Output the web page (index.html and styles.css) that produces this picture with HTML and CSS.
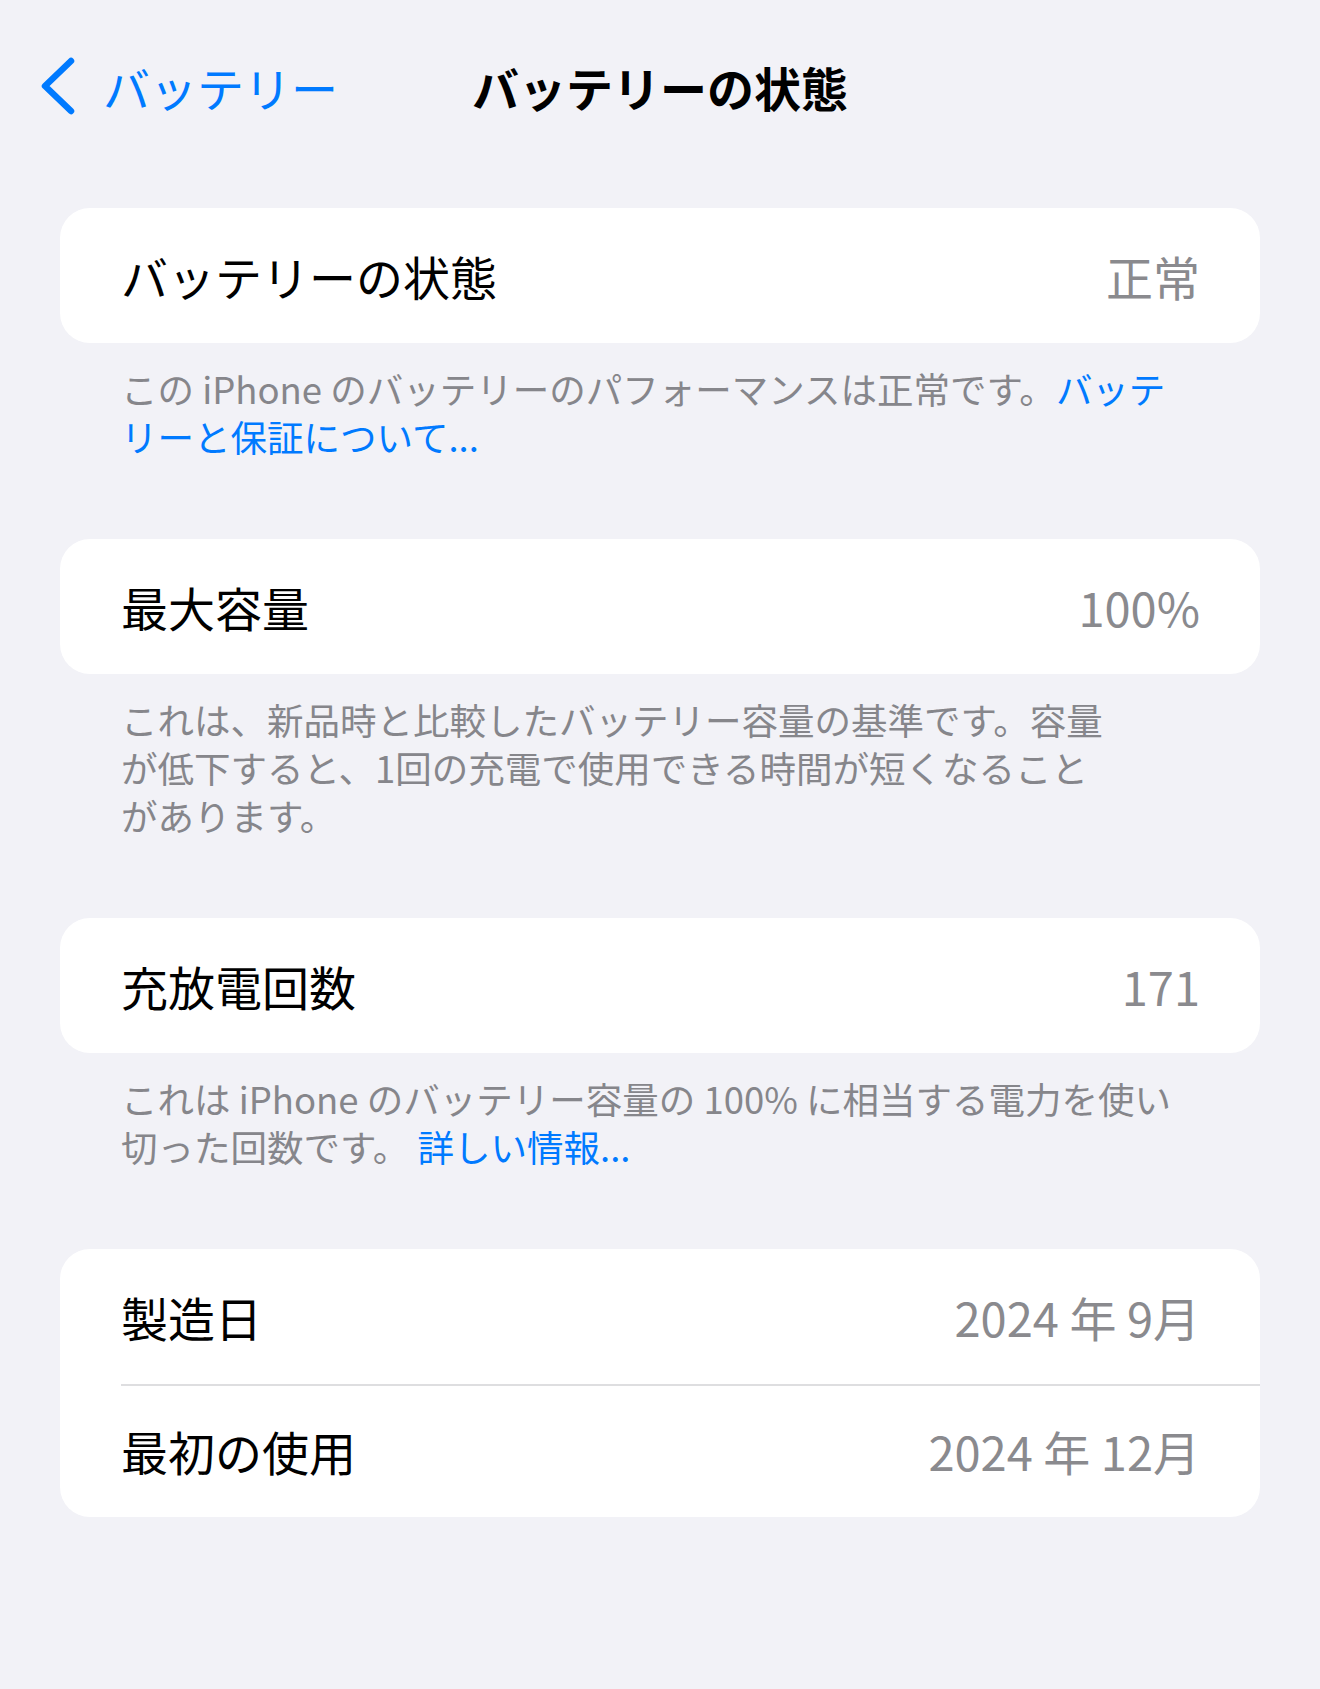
FILE: index.html
```html
<!DOCTYPE html>
<html lang="ja">
<head>
    <meta charset="UTF-8">
    <meta name="viewport" content="width=device-width, initial-scale=1.0">
    <title>バッテリーの状態</title>
    <link rel="stylesheet" href="styles.css">
</head>
<body>

    <header class="nav-bar">
        <a class="back-button" href="#">
            <svg class="back-chevron" viewBox="0 0 36 58" fill="none">
                <path d="M31 4 L5 29 L31 54"
                      stroke="currentColor"
                      stroke-width="6.5"
                      stroke-linecap="round"
                      stroke-linejoin="round"/>
            </svg>
            <span>バッテリー</span>
        </a>
        <h1 class="nav-title">バッテリーの状態</h1>
        <div></div>
    </header>

    <main class="settings">

        <section class="group">
            <div class="card">
                <div class="row">
                    <span class="row-label">バッテリーの状態</span>
                    <span class="row-value">正常</span>
                </div>
            </div>
            <p class="footer">この iPhone のバッテリーのパフォーマンスは正常です。<a href="#">バッテ<br>リーと保証について...</a></p>
        </section>

        <section class="group">
            <div class="card">
                <div class="row">
                    <span class="row-label">最大容量</span>
                    <span class="row-value">100%</span>
                </div>
            </div>
            <p class="footer">これは、新品時と比較したバッテリー容量の基準です。容量<br>が低下すると、1回の充電で使用できる時間が短くなること<br>があります。</p>
        </section>

        <section class="group">
            <div class="card">
                <div class="row">
                    <span class="row-label">充放電回数</span>
                    <span class="row-value">171</span>
                </div>
            </div>
            <p class="footer">これは iPhone のバッテリー容量の 100% に相当する電力を使い<br>切った回数です。 <a href="#">詳しい情報...</a></p>
        </section>

        <section class="group">
            <div class="card">
                <div class="row">
                    <span class="row-label">製造日</span>
                    <span class="row-value">2024 年 9月</span>
                </div>
                <div class="row">
                    <span class="row-label">最初の使用</span>
                    <span class="row-value">2024 年 12月</span>
                </div>
            </div>
        </section>

    </main>

</body>
</html>
```

FILE: styles.css
```css
/* 基本スタイル */
body {
    margin: 0;
    padding: 0;
    min-height: 100vh;
    background-color: #F2F2F7;
    font-family: "Noto Sans CJK JP", "Noto Sans", sans-serif;
    color: #000;
}

a {
    color: #007AFF;
    text-decoration: none;
}

/* ナビゲーションバー */
.nav-bar {
    height: 172px;
    display: grid;
    grid-template-columns: 1fr auto 1fr;
    align-items: center;
    padding: 0 40px;
}

.back-button {
    display: flex;
    align-items: center;
    gap: 27px;
    font-size: 47px;
    line-height: 1;
}

.back-chevron {
    width: 36px;
    height: 58px;
    flex-shrink: 0;
}

.nav-title {
    margin: 0;
    font-size: 47px;
    font-weight: 700;
    line-height: 1;
}

/* リスト */
.settings {
    padding: 36px 60px 0;
}

.group {
    margin-bottom: 78px;
}

.card {
    background: #fff;
    border-radius: 30px;
    overflow: hidden;
}

.row {
    height: 135px;
    display: flex;
    align-items: center;
    justify-content: space-between;
    padding: 0 60px 0 61px;
    font-size: 47px;
    position: relative;
}

.row + .row {
    height: 133px;
}

/* 区切り線 */
.row + .row::before {
    content: "";
    position: absolute;
    top: 0;
    left: 61px;
    right: 0;
    height: 2px;
    background: #DEDEE0;
}

.row-value {
    color: #8A8A8E;
}

.footer {
    margin: 0;
    padding: 22px 61px 0;
    font-size: 36.5px;
    line-height: 48px;
    color: #86868B;
    white-space: nowrap;
}
```
